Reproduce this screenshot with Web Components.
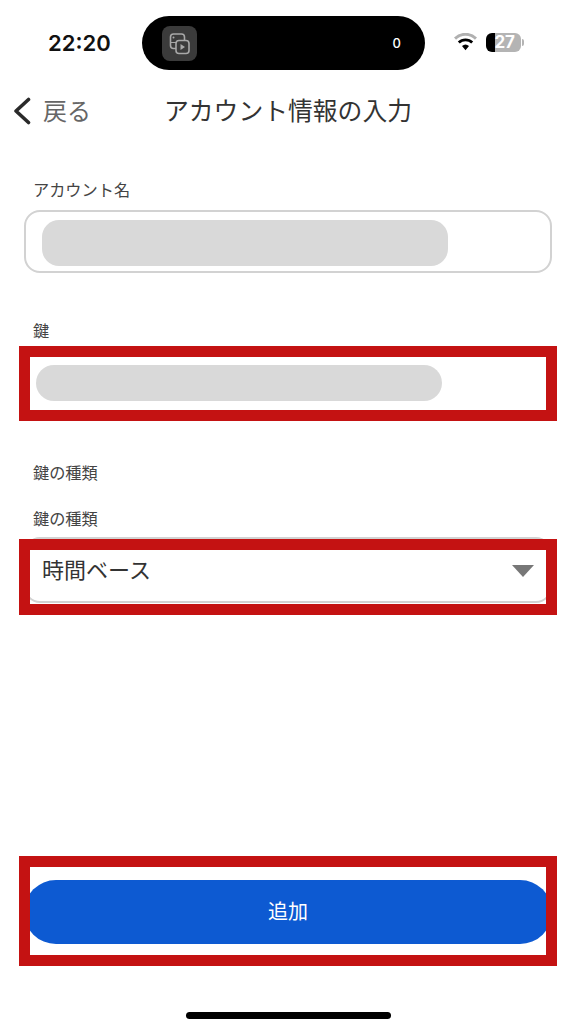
<!DOCTYPE html>
<html lang="ja">
  <head>
    <meta charset="utf-8">
    <title>アカウント情報の入力</title>
<style>
  html, body { margin: 0; background: #fff; }
  body { font-family: "Noto Sans CJK JP", "Noto Sans", sans-serif; color: #333; }
</style>
  </head>
  <body>
    <app-screen>
      <status-bar></status-bar>
      <nav-bar back="戻る">アカウント情報の入力</nav-bar>
      <form-column>
        <field-label>アカウント名</field-label>
        <text-field boxed></text-field>
        <field-label style="margin-top:46px">鍵</field-label>
        <mark-frame style="--top:-11px;--bottom:-11px;margin-top:14px"><text-field></text-field></mark-frame>
        <field-label style="margin-top:51px">鍵の種類</field-label>
        <field-label style="margin-top:22px">鍵の種類</field-label>
        <mark-frame style="--top:2px;--bottom:-12px;margin-top:6px"><select-field>時間ベース</select-field></mark-frame>
      </form-column>
      <mark-frame slot="footer" style="--top:-24px;--bottom:-22px"><primary-button>追加</primary-button></mark-frame>
      <home-bar slot="footer"></home-bar>
    </app-screen>

    <template id="app_screen_template">
      <style>
        :host { display: flex; flex-direction: column; height: 1024px; overflow: hidden; }
        .main { flex: 1; }
        .footer { padding: 0 24px; }
      </style>
      <div class="main"><slot></slot></div>
      <div class="footer"><slot name="footer"></slot></div>
    </template>

    <template id="status_bar_template">
      <style>
        :host { display: grid; grid-template-columns: 142px 283px 1fr; align-items: center; padding-top: 16px; font-family: "Inter", "Liberation Sans", sans-serif; }
        .time { padding-left: 48px; font-size: 22px; font-weight: 600; color: #111; margin-top: -1px; }
        .pill { height: 54px; border-radius: 27px; background: #000; display: flex; align-items: center; justify-content: space-between; padding: 0 24px 0 20px; box-sizing: border-box; }
        .app { width: 35px; height: 35px; border-radius: 8px; background: #3b3b3b; display: block; }
        .count { color: #fff; font-size: 13px; font-weight: 500; margin-top: -1px; }
        .right { display: flex; align-items: center; gap: 9px; padding-left: 29px; margin-top: -2px; }
        .battery { position: relative; width: 35px; height: 19px; border-radius: 6px; background: linear-gradient(90deg, #000 0 9px, #b4b4b4 9px); color: #fff; font-size: 17px; font-weight: 700; line-height: 19px; text-align: right; padding-right: 6px; box-sizing: border-box; }
        .battery::after { content: ""; position: absolute; right: -3px; top: 6px; width: 2px; height: 7px; border-radius: 0 2px 2px 0; background: #b4b4b4; }
      </style>
      <div class="time">22:20</div>
      <div class="pill">
        <svg class="app" viewBox="0 0 35 35" fill="none" stroke="#a8a8a8" stroke-width="1.6">
          <path d="M14 22.5h-2.5a3 3 0 0 1-3-3V11a3 3 0 0 1 3-3h8a3 3 0 0 1 3 3v3.5"/>
          <rect x="14" y="14.5" width="13" height="13" rx="3"/>
          <path d="M18.5 18v6l4.5-3z" fill="#a8a8a8" stroke="none"/>
          <circle cx="11.5" cy="11.5" r="1" fill="#a8a8a8" stroke="none"/>
          <path d="M9 16.5h5" stroke-width="1.2"/>
        </svg>
        <span class="count">0</span>
      </div>
      <div class="right">
        <svg width="23" height="18" viewBox="0 0 23 18">
          <path d="M1 5.6a15 15 0 0 1 21 0" fill="none" stroke="#b0b0b0" stroke-width="3"/>
          <path d="M4.8 9.6a9.6 9.6 0 0 1 13.4 0" fill="none" stroke="#000" stroke-width="2.8"/>
          <path d="M8 13l3.5 4.2 3.5-4.2a5.2 5.2 0 0 0-7 0z" fill="#000"/>
        </svg>
        <div class="battery">27</div>
      </div>
    </template>

    <template id="nav_bar_template">
      <style>
        :host { display: grid; grid-template-columns: 1fr auto 1fr; align-items: center; height: 42px; margin-top: 20px; color: #333; }
        .back { display: flex; align-items: center; gap: 11px; padding-left: 13px; font-size: 24px; font-weight: 400; color: #666; }
        .back span { padding-bottom: 3px; }
        .title { font-size: 24.8px; font-weight: 400; white-space: nowrap; padding-bottom: 4px; }
      </style>
      <div class="back">
        <svg width="19" height="28" viewBox="0 0 19 28" fill="none" stroke="#2a2a2a" stroke-width="3.6" stroke-linecap="round" stroke-linejoin="round"><path d="M15.5 2.5 3 14l12.5 11.5"/></svg>
        <span id="back"></span>
      </div>
      <div class="title"><slot></slot></div>
      <div></div>
    </template>

    <template id="form_column_template">
      <style>
        :host { display: block; padding: 46px 24px 0; }
      </style>
      <slot></slot>
    </template>

    <template id="field_label_template">
      <style>
        :host { display: block; height: 24px; line-height: 22px; padding-left: 9px; font-size: 16.2px; color: #444; }
      </style>
      <slot></slot>
    </template>

    <template id="text_field_template">
      <style>
        :host { display: block; height: 53px; padding: 8px 110px 0 12px; box-sizing: border-box; }
        :host([boxed]) { height: 63px; margin-top: 8px; padding: 8px 102px 0 16px; border: 2px solid #d2d2d2; border-radius: 16px; }
        .mask { height: 36px; border-radius: 18px; background: #d9d9d9; }
        :host([boxed]) .mask { height: 46px; border-radius: 17px; }
      </style>
      <div class="mask"></div>
    </template>

    <template id="select_field_template">
      <style>
        :host { display: flex; align-items: center; justify-content: space-between; height: 66px; padding: 0 16px; box-sizing: border-box; border: 2px solid #d2d2d2; border-radius: 16px; font-size: 22px; color: #333; }
        span { padding-bottom: 4px; }
        .arrow { width: 0; height: 0; border-left: 11px solid transparent; border-right: 11px solid transparent; border-top: 12px solid #777; margin-top: 2px; }
      </style>
      <span><slot></slot></span>
      <div class="arrow"></div>
    </template>

    <template id="mark_frame_template">
      <style>
        :host { display: block; position: relative; }
        .ring { position: absolute; left: -5px; right: -5px; top: var(--top); bottom: var(--bottom); border: 11px solid #c41212; pointer-events: none; }
      </style>
      <slot></slot>
      <div class="ring"></div>
    </template>

    <template id="primary_button_template">
      <style>
        :host { display: flex; align-items: center; justify-content: center; height: 64px; border-radius: 32px; background: #0d5ad2; color: #fff; font-size: 20px; }
        span { padding-bottom: 4px; }
      </style>
      <span><slot></slot></span>
    </template>

    <template id="home_bar_template">
      <style>
        :host { display: block; width: 205px; height: 7px; margin: 68px auto 5px; border-radius: 4px; background: #000; }
      </style>
    </template>

    <script>
      // every element just clones its template into an open shadow root
      function define(name, templateId, setup) {
        customElements.define(name, class extends HTMLElement {
          constructor() {
            super()
            let copyOfTemplate = document.getElementById(templateId).content.cloneNode(true)
            this.attachShadow({mode: 'open'}).appendChild(copyOfTemplate)
          }
          connectedCallback() {
            if (setup) setup(this)
          }
        })
      }
      define('app-screen', 'app_screen_template')
      define('status-bar', 'status_bar_template')
      define('nav-bar', 'nav_bar_template', el => {
        el.shadowRoot.getElementById('back').textContent = el.getAttribute('back')
      })
      define('form-column', 'form_column_template')
      define('field-label', 'field_label_template')
      define('text-field', 'text_field_template')
      define('select-field', 'select_field_template')
      define('mark-frame', 'mark_frame_template')
      define('primary-button', 'primary_button_template')
      define('home-bar', 'home_bar_template')
    </script>
  </body>
</html>
